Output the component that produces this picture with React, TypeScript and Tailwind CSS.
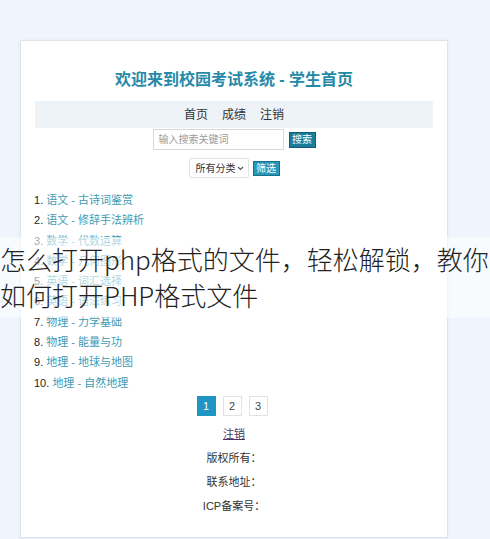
const items = [
  "语文 - 古诗词鉴赏",
  "语文 - 修辞手法辨析",
  "数学 - 代数运算",
  "数学 - 几何图形",
  "英语 - 词汇选择",
  "英语 - 语法练习",
  "物理 - 力学基础",
  "物理 - 能量与功",
  "地理 - 地球与地图",
  "地理 - 自然地理",
];

export default function App() {
  return (
    <div className="relative w-[490px] h-[539px] overflow-hidden bg-[#eef5fc] font-['Liberation_Sans','Noto_Sans_CJK_SC',sans-serif] text-[#333]">
      <div className="ml-[20px] mt-[40px] w-[428px] h-[498px] border border-[#dfe5ec] bg-white px-[14px] shadow-[0_0_3px_rgba(0,0,0,0.06)]">
        <h1 className="pt-[28px] text-center text-[16px] leading-[22px] font-bold text-[#2689a8]">
          欢迎来到校园考试系统 - 学生首页
        </h1>

        <nav className="mt-[10px] flex h-[27px] items-center justify-center gap-[14px] bg-[#eef3f8] text-[12px] text-[#333]">
          <a>首页</a>
          <a>成绩</a>
          <a>注销</a>
        </nav>

        <div className="mt-[1px] flex items-center justify-center gap-[5px]">
          <div className="flex h-[21px] w-[131px] items-center border border-[#d8d8d8] px-[5px] text-[10px] text-[#9a9a9a]">
            输入搜索关键词
          </div>
          <button className="flex h-[16px] w-[27px] items-center justify-center border border-[#0f5e75] bg-[#1c7d99] text-[10px] text-white">
            搜索
          </button>
        </div>

        <div className="mt-[8px] flex items-center justify-center gap-[4px]">
          <div className="flex h-[20px] w-[60px] items-center justify-between whitespace-nowrap rounded-[2px] border border-[#e2e2e2] pl-[6px] pr-[4px] text-[10px] text-[#333]">
            <span>所有分类</span>
            <svg width="7" height="5" viewBox="0 0 7 5">
              <path d="M1 1l2.5 2.5L6 1" fill="none" stroke="#555" strokeWidth="1.2" />
            </svg>
          </div>
          <button className="flex h-[15px] w-[27px] items-center justify-center border border-[#17708c] bg-[#2a97b9] text-[10px] text-white">
            筛选
          </button>
        </div>

        <ol className="mt-[12px] text-[11px] leading-[20.3px]">
          {items.map((t, i) => (
            <li key={t} className="-ml-px">
              <span className="text-[#222]">{i + 1}. </span>
              <a className="text-[#3d9bb5]">{t}</a>
            </li>
          ))}
        </ol>

        <div className="mt-[3px] flex justify-center gap-[7px] pr-[4px] text-[11px]">
          <span className="flex h-[20px] w-[19px] items-center justify-center bg-[#1e95c3] text-white">1</span>
          <span className="flex h-[20px] w-[19px] items-center justify-center border border-[#e3e3e3] text-[#444]">2</span>
          <span className="flex h-[20px] w-[19px] items-center justify-center border border-[#e3e3e3] text-[#444]">3</span>
        </div>

        <div className="mt-[6px] flex flex-col items-center text-[11px] leading-[24px] text-[#333]">
          <a className="text-[#4a3560] underline">注销</a>
          <p>版权所有：</p>
          <p>联系地址：</p>
          <p>ICP备案号：</p>
        </div>
      </div>

      <div className="absolute left-0 top-[237px] h-[81px] w-[490px] bg-white/60 pt-[4px] font-['Noto_Sans_CJK_SC',sans-serif] text-[26px] font-light leading-[36px] text-[#222] whitespace-nowrap">
        <p>怎么打开php格式的文件，轻松解锁，教你</p>
        <p>如何打开PHP格式文件</p>
      </div>
    </div>
  );
}
